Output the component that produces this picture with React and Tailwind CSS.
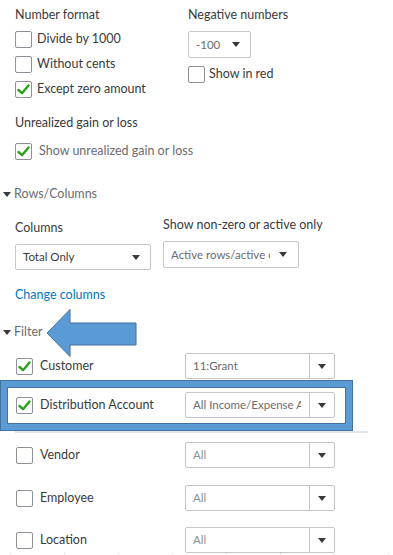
import React from "react";

const font = { fontFamily: "Lato, 'Open Sans', sans-serif" };

function Check({ checked }) {
  return (
    <div className="w-[17px] h-[17px] shrink-0 rounded-[2px] border border-[#8d9096] bg-white flex items-center justify-center">
      {checked && (
        <svg width="13" height="11" viewBox="0 0 13 11">
          <path d="M1.5 6 L5 9.2 L11.5 1.5" fill="none" stroke="#2ca01c" strokeWidth="2.4" strokeLinecap="round" strokeLinejoin="round" />
        </svg>
      )}
    </div>
  );
}

function Caret() {
  return (
    <svg width="8" height="5" viewBox="0 0 8 5">
      <path d="M0 0 H8 L4 5 Z" fill="#393a3d" />
    </svg>
  );
}

function CheckRow({ checked, label, light, gap = "gap-[5px]" }) {
  return (
    <div className={`flex items-center h-[25px] ${gap}`}>
      <Check checked={checked} />
      <span className={`text-[12.5px] ${light ? "text-[#6b6c72]" : "text-[#393a3d]"} whitespace-nowrap`}>{label}</span>
    </div>
  );
}

function SplitSelect({ value, muted }) {
  return (
    <div className="flex w-[150px] h-[26px] border border-[#c4c6cc] rounded-[2px] bg-white">
      <div className="flex-1 flex items-center pl-[7px] pr-[8px] overflow-hidden">
        <span className={`block w-full overflow-hidden whitespace-nowrap text-[11.5px] ${muted ? "text-[#8d9096]" : "text-[#6b6c72]"}`}>{value}</span>
      </div>
      <div className="w-[25px] border-l border-[#c4c6cc] flex items-center justify-center">
        <Caret />
      </div>
    </div>
  );
}

function FilterRow({ checked, label, value, muted }) {
  return (
    <div className="flex items-center h-[26px]">
      <div className="w-[185px] pl-[16px] flex items-center gap-[7px]">
        <Check checked={checked} />
        <span className="text-[12.5px] text-[#393a3d] whitespace-nowrap">{label}</span>
      </div>
      <SplitSelect value={value} muted={muted} />
    </div>
  );
}

export default function App() {
  return (
    <div className="relative w-[393px] h-[555px] overflow-hidden bg-white" style={font}>
      {/* top section */}
      <div className="flex pl-[15px]">
        <div className="w-[173px] flex flex-col">
          <div className="mt-[6px] h-[18px] flex items-center text-[12.5px] text-[#393a3d]">Number format</div>
          <div className="mt-[3px]">
            <CheckRow label="Divide by 1000" />
            <CheckRow label="Without cents" />
            <CheckRow checked label="Except zero amount" />
          </div>
          <div className="mt-[12px] h-[18px] flex items-center text-[12.5px] text-[#393a3d] whitespace-nowrap">Unrealized gain or loss</div>
          <div className="mt-[7px]">
            <CheckRow checked light label="Show unrealized gain or loss" gap="gap-[7px]" />
          </div>
        </div>
        <div className="flex flex-col">
          <div className="mt-[6px] h-[18px] flex items-center text-[12.5px] text-[#393a3d]">Negative numbers</div>
          <div className="mt-[7px] w-[63px] h-[27px] border border-[#c4c6cc] rounded-[2px] flex items-center justify-between pl-[7px] pr-[10px] text-[11.5px] text-[#6b6c72]">
            <span>-100</span>
            <Caret />
          </div>
          <div className="mt-[4px]">
            <CheckRow label="Show in red" gap="gap-[4px]" />
          </div>
        </div>
      </div>

      {/* Rows/Columns */}
      <div className="mt-[21px] h-[18px] flex items-center gap-[3px] pl-[3px] text-[12.5px] text-[#6b6c72]">
        <Caret />
        <span>Rows/Columns</span>
      </div>
      <div className="flex pl-[15px] items-start">
        <div className="w-[148px] flex flex-col">
          <div className="mt-[16px] h-[18px] flex items-center text-[12.5px] text-[#393a3d]">Columns</div>
          <div className="mt-[7px] w-[136px] h-[26px] border border-[#c4c6cc] rounded-[2px] flex items-center justify-between pl-[7px] pr-[10px] text-[11.5px] text-[#393a3d]">
            <span>Total Only</span>
            <Caret />
          </div>
        </div>
        <div className="flex flex-col">
          <div className="mt-[13px] h-[18px] flex items-center text-[12.5px] text-[#393a3d] whitespace-nowrap">Show non-zero or active only</div>
          <div className="mt-[7px] w-[136px] h-[27px] border border-[#c4c6cc] rounded-[2px] flex items-center pl-[7px] pr-[11px] text-[11.5px] text-[#6b6c72]">
            <span className="w-[99px] overflow-hidden whitespace-nowrap">Active rows/active columns</span>
            <span className="ml-auto"><Caret /></span>
          </div>
        </div>
      </div>
      <div className="mt-[16px] pl-[15px] h-[18px] flex items-center text-[12.5px] text-[#0077c5]">Change columns</div>

      {/* Filter */}
      <div className="mt-[19px] h-[18px] flex items-center gap-[3px] pl-[3px] text-[12.5px] text-[#6b6c72]">
        <Caret />
        <span>Filter</span>
      </div>
      <div className="mt-[12px]">
        <FilterRow checked label="Customer" value="11:Grant" />
      </div>
      <div className="relative mt-[13px]">
        <div className="absolute left-[1px] top-[-11px] w-[351px] h-[49px] border-[6px] border-[#5b9bd5] outline outline-1 outline-[#41719c] shadow-[inset_0_0_0_1px_#41719c]" />
        <FilterRow checked label="Distribution Account" value="All Income/Expense Accounts" />
      </div>
      <div className="mt-[13px] ml-[15px] w-[353px] h-[2px] bg-[#e3e5e8]" />
      <div className="mt-[9px]">
        <FilterRow label="Vendor" value="All" muted />
      </div>
      <div className="mt-[17px]">
        <FilterRow label="Employee" value="All" muted />
      </div>
      <div className="mt-[16px]">
        <FilterRow label="Location" value="All" muted />
      </div>

      {/* faint dotted line at bottom */}
      <div className="absolute left-[10px] top-[553px] flex gap-[53px]">
        {Array.from({ length: 8 }).map((_, i) => (
          <div key={i} className="w-px h-px bg-[#c8c8c8]" />
        ))}
      </div>

      {/* Arrow annotation */}
      <svg className="absolute left-[45px] top-[308px]" width="94" height="50" viewBox="0 0 94 50">
        <path d="M2 25 L25 1.5 L25 15 L91 15 L91 37 L25 37 L25 48.5 Z" fill="#5b9bd5" stroke="#41719c" strokeWidth="1" />
      </svg>
    </div>
  );
}
